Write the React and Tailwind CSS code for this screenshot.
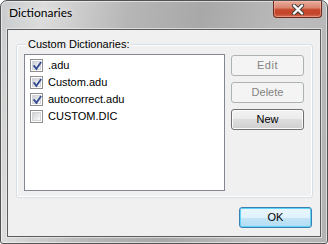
import React from "react";

function Check({ checked }) {
  return (
    <div className="w-[13px] h-[13px] shrink-0 border border-[#8e8f8f] bg-white p-[1px]">
      <div className="relative w-full h-full border border-[#d2d4d8] bg-[linear-gradient(135deg,#cdd0d5_0%,#e6e7e9_50%,#fbfbfb_100%)]">
        {checked && (
          <svg className="absolute left-[-1px] top-[-1px]" width="11" height="11" viewBox="0 0 11 11">
            <path d="M2.2 5.2 L4.4 7.9 L8.6 1.8" fill="none" stroke="#3a5094" strokeWidth="1.9" strokeLinecap="square" />
          </svg>
        )}
      </div>
    </div>
  );
}

function Item({ checked, label }) {
  return (
    <div className="h-[17px] flex items-center gap-[5px]">
      <Check checked={checked} />
      <span className="leading-[13px] -mt-[1px]">{label}</span>
    </div>
  );
}

export default function App() {
  return (
    <div className="w-[328px] h-[244px] flex flex-col px-[6px] pb-[6px] border border-[#525252] rounded-t-[7px] rounded-b-[3px] bg-[linear-gradient(100deg,#c8cacc_0%,#dcdcdc_12%,#b6b6b6_35%,#a8a8a8_55%,#bcbcbc_80%,#b3b3b3_100%)] shadow-[inset_0_0_0_1px_rgba(255,255,255,0.55)] font-['Liberation_Sans',Arial,sans-serif] text-[11px] text-black overflow-hidden">
      <div className="-mx-[6px] h-[28px] shrink-0 flex items-start justify-between pl-[8px] pr-[5px]">
        <div className="pt-[4px] font-['Lato','Liberation_Sans',sans-serif] text-[12px] leading-[16px] text-black [text-shadow:0_0_6px_rgba(255,255,255,0.95)]">
          Dictionaries
        </div>
        <div className="w-[49px] h-[17px] flex items-center justify-center rounded-b-[4px] border border-t-0 border-[#6e2a1f] bg-[linear-gradient(to_bottom,#e8ad9d_0%,#da8670_42%,#c7472b_55%,#c2462c_80%,#d36e54_100%)] shadow-[inset_0_0_0_1px_rgba(255,200,180,0.45)]">
          <svg width="14" height="11" viewBox="0 0 14 11">
            <path d="M3 1.5 L11 9.5 M11 1.5 L3 9.5" stroke="#3b3b3b" strokeWidth="4.2" strokeLinecap="round" fill="none" />
            <path d="M3 1.5 L11 9.5 M11 1.5 L3 9.5" stroke="#ffffff" strokeWidth="2.4" strokeLinecap="round" fill="none" />
          </svg>
        </div>
      </div>
      <div className="h-[208px] shrink-0 flex flex-col border border-[#5d5d5d] bg-[#f0f0f0] pl-[8px] pr-[7px] shadow-[0_0_0_1px_rgba(235,235,235,0.7)]">
        <div className="relative mt-[14px] h-[154px] shrink-0 flex gap-[6px] border border-[#d5dfe5] rounded-[3px] pt-[9px] pl-[7px] pr-[8px] pb-[6px] shadow-[inset_0_0_0_1px_#ffffff]">
          <span className="absolute left-[9px] top-[-7px] bg-[#f0f0f0] px-[2px] leading-[13px]">Custom Dictionaries:</span>
          <div className="w-[201px] h-[137px] shrink-0 border border-[#828790] bg-white pt-[2px] pl-[5px]">
            <Item checked label=".adu" />
            <Item checked label="Custom.adu" />
            <Item checked label="autocorrect.adu" />
            <Item checked={false} label="CUSTOM.DIC" />
          </div>
          <div className="flex flex-col gap-[6px] pt-[1px]">
            <div className="w-[73px] h-[21px] flex items-center justify-center rounded-[3px] border border-[#adb2b5] bg-[#f4f4f4] text-[#838383] tracking-[0.5px]">Edit</div>
            <div className="w-[73px] h-[21px] flex items-center justify-center rounded-[3px] border border-[#adb2b5] bg-[#f4f4f4] text-[#838383]">Delete</div>
            <div className="w-[73px] h-[21px] flex items-center justify-center rounded-[3px] border border-[#707070] bg-[linear-gradient(to_bottom,#f2f2f2_0%,#ebebeb_50%,#dddddd_50%,#cfcfcf_100%)] shadow-[inset_0_0_0_1px_#fbfbfb]">New</div>
          </div>
        </div>
        <div className="mt-[9px] flex justify-end pr-[1px]">
          <div className="w-[73px] h-[21px] flex items-center justify-center rounded-[3px] border border-[#3c7fb1] bg-[linear-gradient(to_bottom,#eaf6fd_0%,#dff2fc_50%,#c4e5f7_50%,#b3dcf3_100%)] shadow-[inset_0_0_0_1px_#5fd3f7]">OK</div>
        </div>
      </div>
    </div>
  );
}
